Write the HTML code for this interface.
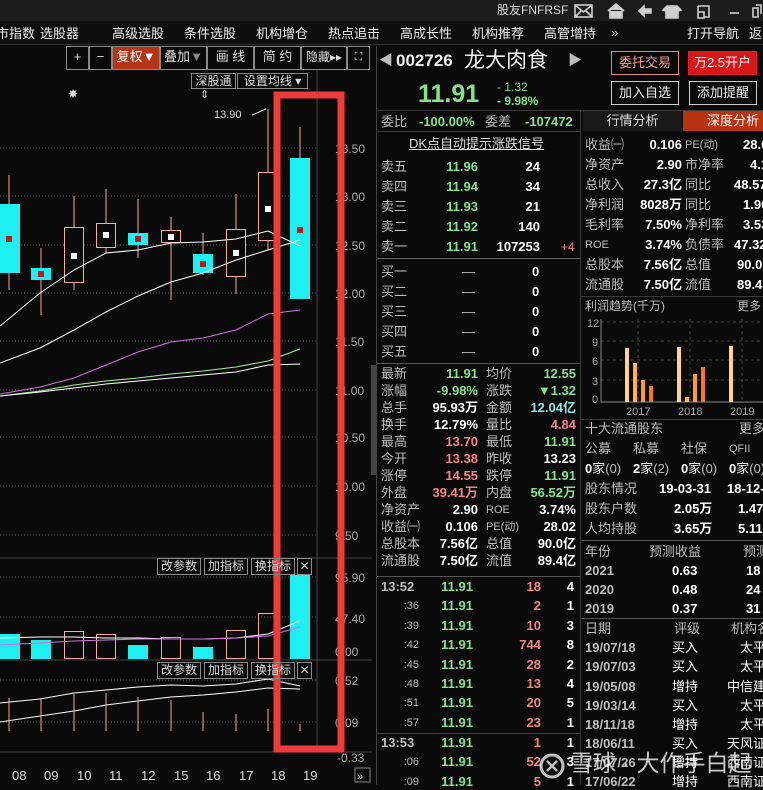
<!DOCTYPE html>
<html><head><meta charset="utf-8"><style>
*{margin:0;padding:0;box-sizing:border-box}
body{width:763px;height:785px;overflow:hidden;background:#0a0a0a;position:relative;font-family:"Liberation Sans","Noto Sans CJK SC",sans-serif;font-size:13px;color:#fff}
.a{position:absolute;white-space:nowrap;line-height:16px}
.g{color:#86e28e}.r{color:#f38585}.w{color:#fff}.l{color:#bdbdbd}.c{color:#8fe8ea}
.b{font-weight:bold}
.rt{text-align:right}
.btn{position:absolute;border:1px solid #8a8a8a;color:#ddd;text-align:center;line-height:20px;font-size:13px}
.hl{position:absolute;height:1px;background:#3a3a3a}
.vl{position:absolute;width:1px;background:#3a3a3a}
</style></head><body>
<!-- title bar -->
<div style="position:absolute;left:0;top:0;width:763px;height:21px;background:#1c1c1c"></div>
<div class="a" style="left:497px;top:2px;font-size:12px;color:#ddd">股友FNFRSF</div>
<svg style="position:absolute;left:570px;top:2px" width="193" height="18" viewBox="0 0 193 18" fill="none" stroke="#cfcfcf" stroke-width="1.6">
<rect x="5" y="3" width="17" height="12"/><path d="M5 3l8.5 7 8.5-7M5 15l6-6M22 15l-6-6"/>
<path d="M38 9l8-7 8 7M40 8v8h12V8" fill="#cfcfcf"/>
<path d="M69 9l5-5v3h7v4h-7v3z" fill="#cfcfcf"/>
<path d="M97 4h10l4 4-3 1v7h-12v-7l-3-1z" fill="#cfcfcf"/>
<path d="M128 4h11v11h-5M128 4v6h6v6h-6z"/>
<path d="M160 11h9"/><path d="M186 3h5v9M183 6h5v9h-5z"/>
</svg>
<!-- menu -->
<div style="position:absolute;left:0;top:21px;width:763px;height:24px;background:#0e0e0e;border-bottom:1px solid #333"></div>
<div class="a" style="top:26px;left:-4px;color:#eee">市指数</div>
<div class="a" style="top:26px;left:40px;color:#eee">选股器</div>
<div class="a" style="top:26px;left:112px;color:#eee">高级选股</div>
<div class="a" style="top:26px;left:184px;color:#eee">条件选股</div>
<div class="a" style="top:26px;left:256px;color:#eee">机构增仓</div>
<div class="a" style="top:26px;left:328px;color:#eee">热点追击</div>
<div class="a" style="top:26px;left:400px;color:#eee">高成长性</div>
<div class="a" style="top:26px;left:472px;color:#eee">机构推荐</div>
<div class="a" style="top:26px;left:544px;color:#eee">高管增持</div>
<div class="a" style="top:25px;left:611px;color:#ccc">»</div>
<div class="a" style="top:26px;left:687px;color:#eee">打开导航</div>
<div class="a" style="top:26px;left:749px;color:#eee">返回</div>

<!-- chart toolbar -->
<div style="position:absolute;left:66px;top:46px;width:304px;height:24px;border:1px solid #888;background:#0a0a0a"></div>
<div class="btn" style="left:66px;top:46px;width:23px;height:24px;border-width:1px">+</div>
<div class="btn" style="left:89px;top:46px;width:23px;height:24px">−</div>
<div class="btn" style="left:112px;top:46px;width:48px;height:24px;background:#b43414;color:#fff">复权▼</div>
<div class="btn" style="left:160px;top:46px;width:47px;height:24px">叠加<span style="color:#888">▼</span></div>
<div class="btn" style="left:207px;top:46px;width:47px;height:24px">画 线</div>
<div class="btn" style="left:254px;top:46px;width:47px;height:24px">简 约</div>
<div class="btn" style="left:301px;top:46px;width:46px;height:24px;font-size:12px">隐藏▸▸</div>
<div class="btn" style="left:347px;top:46px;width:23px;height:24px;font-size:11px">⛶</div>
<div class="btn" style="left:191px;top:73px;width:45px;height:16px;line-height:14px;font-size:12px">深股通</div>
<div class="btn" style="left:237px;top:73px;width:71px;height:16px;line-height:14px;font-size:12px">设置均线 ▾</div>

<!-- chart svg -->
<svg style="position:absolute;left:0;top:70px" width="372" height="715" viewBox="0 70 372 715">
<g stroke="#555" stroke-dasharray="1 2" stroke-width="1">
<line x1="0" y1="148" x2="317" y2="148"/><line x1="0" y1="196" x2="317" y2="196"/><line x1="0" y1="245" x2="317" y2="245"/>
<line x1="0" y1="293" x2="317" y2="293"/><line x1="0" y1="341" x2="317" y2="341"/><line x1="0" y1="390" x2="317" y2="390"/>
<line x1="0" y1="437" x2="317" y2="437"/><line x1="0" y1="486" x2="317" y2="486"/><line x1="0" y1="535" x2="317" y2="535"/>
<line x1="0" y1="577" x2="317" y2="577"/><line x1="0" y1="617" x2="317" y2="617"/><line x1="0" y1="680" x2="317" y2="680"/><line x1="0" y1="722" x2="317" y2="722"/>
</g>
<line x1="317" y1="70" x2="317" y2="752" stroke="#444"/>
<line x1="0" y1="558" x2="372" y2="558" stroke="#444"/>
<line x1="0" y1="660" x2="372" y2="660" stroke="#444"/>
<line x1="0" y1="752" x2="372" y2="752" stroke="#444"/>
<!-- candles -->
<g stroke="#f4a8a8" fill="none" stroke-width="1">
<line x1="9" y1="175" x2="9" y2="290"/><line x1="41" y1="248" x2="41" y2="315"/>
<line x1="74" y1="196" x2="74" y2="290"/><rect x="64.5" y="227.5" width="19" height="55" fill="#0a0a0a"/>
<line x1="106" y1="189" x2="106" y2="253"/><rect x="96.5" y="223.5" width="19" height="24" fill="#0a0a0a"/>
<line x1="138" y1="199" x2="138" y2="258"/>
<line x1="171" y1="217" x2="171" y2="300"/><rect x="161.5" y="230.5" width="19" height="12" fill="#0a0a0a"/>
<line x1="203" y1="233" x2="203" y2="275"/>
<line x1="236" y1="194" x2="236" y2="294"/><rect x="226.5" y="229.5" width="19" height="47" fill="#0a0a0a"/>
<line x1="268" y1="109" x2="268" y2="250"/><rect x="258.5" y="172.5" width="19" height="68" fill="#0a0a0a"/>
<line x1="300" y1="127" x2="300" y2="160"/>
</g>
<g fill="#1ef0f2">
<rect x="0" y="204" width="20" height="69"/><rect x="31" y="268" width="20" height="12"/>
<rect x="128" y="233" width="20" height="12"/><rect x="193" y="254" width="20" height="19"/>
<rect x="290" y="158" width="20" height="141"/>
</g>
<g fill="#c01818"><rect x="6" y="236" width="6" height="6"/><rect x="38" y="271" width="6" height="6"/><rect x="135" y="236" width="6" height="6"/><rect x="200" y="261" width="6" height="6"/><rect x="297" y="227" width="6" height="6"/></g>
<g fill="#fff"><rect x="71" y="253" width="6" height="6"/><rect x="103" y="232" width="6" height="6"/><rect x="168" y="234" width="6" height="6"/><rect x="233" y="250" width="6" height="6"/><rect x="265" y="206" width="6" height="6"/></g>
<!-- MAs -->
<g fill="none" stroke-width="1">
<polyline stroke="#fff" points="0,326 40,293 74,270 106,253 138,250 171,243 203,242 236,239 268,231 300,246"/>
<polyline stroke="#fff" points="0,363 40,348 74,330 106,312 138,296 171,282 203,273 236,260 268,250 300,240"/>
<polyline stroke="#d070e0" points="0,394 40,387 74,378 106,365 138,352 171,342 203,338 236,330 268,314 300,310"/>
<polyline stroke="#a8f0a0" points="0,396 40,391 74,385 106,381 138,378 171,374 203,371 236,367 268,361 300,349"/>
<polyline stroke="#fff" points="0,396 40,392 74,388 106,384 138,381 171,378 203,375 236,372 268,365 300,364"/>
</g>
<text x="214" y="118" fill="#ddd" font-size="11" font-family="Liberation Sans">13.90</text>
<path d="M252 115l14-6" stroke="#ddd" fill="none"/>
<text x="68" y="98" fill="#ddd" font-size="12">✸</text>
<text x="200" y="98" fill="#ddd" font-size="11">⇕</text>
<!-- price labels -->
<g fill="#aaa" font-size="12" font-family="Liberation Sans">
<text x="335" y="153">13.50</text><text x="335" y="201">13.00</text><text x="335" y="250">12.50</text><text x="335" y="298">12.00</text>
<text x="335" y="346">11.50</text><text x="335" y="395">11.00</text><text x="335" y="442">10.50</text><text x="335" y="491">10.00</text><text x="335" y="540">9.50</text>
<text x="335" y="582">95.90</text><text x="335" y="623">47.40</text><text x="335" y="656">0.00</text>
<text x="335" y="685">0.52</text><text x="335" y="727">0.09</text><text x="337" y="762">-0.33</text>
</g>
<!-- volume -->
<g fill="#1ef0f2"><rect x="0" y="634" width="20" height="25"/><rect x="31" y="640" width="20" height="19"/><rect x="128" y="645" width="20" height="14"/><rect x="193" y="647" width="20" height="12"/><rect x="290" y="575" width="20" height="84"/></g>
<g fill="none" stroke="#f4a8a8"><rect x="64.5" y="631.5" width="19" height="27"/><rect x="96.5" y="634.5" width="19" height="24"/><rect x="161.5" y="637.5" width="19" height="21"/><rect x="226.5" y="630.5" width="19" height="28"/><rect x="258.5" y="613.5" width="19" height="45"/></g>
<polyline fill="none" stroke="#fff" points="0,638 40,637 74,637 106,638 138,638 171,639 203,639 236,638 268,634 300,621"/>
<polyline fill="none" stroke="#d070e0" points="0,645 40,643 74,641 106,640 138,639 171,639 203,639 236,638 268,636 300,627"/>
<!-- MACD -->
<polyline fill="none" stroke="#fff" points="0,703 40,699 74,693 106,690 138,687 171,685 203,686 236,684 268,679 300,686"/>
<polyline fill="none" stroke="#fff" points="0,722 40,716 74,711 106,705 138,701 171,697 203,695 236,692 268,688 300,689"/>
<g stroke="#f4a8a8"><line x1="9" y1="698" x2="9" y2="731"/><line x1="41" y1="698" x2="41" y2="731"/><line x1="74" y1="693" x2="74" y2="731"/><line x1="106" y1="693" x2="106" y2="731"/><line x1="138" y1="697" x2="138" y2="731"/><line x1="171" y1="700" x2="171" y2="731"/><line x1="203" y1="712" x2="203" y2="731"/><line x1="236" y1="714" x2="236" y2="731"/><line x1="268" y1="709" x2="268" y2="731"/><line x1="300" y1="724" x2="300" y2="731"/></g>
<!-- dates -->
<g fill="#ddd" font-size="13" font-family="Liberation Sans">
<text x="12" y="780">08</text><text x="44" y="780">09</text><text x="77" y="780">10</text><text x="109" y="780">11</text><text x="141" y="780">12</text><text x="174" y="780">15</text><text x="206" y="780">16</text><text x="239" y="780">17</text><text x="271" y="780">18</text><text x="303" y="780">19</text>
</g>
<rect x="355" y="768" width="15" height="14" fill="none" stroke="#888"/><text x="357" y="780" fill="#ddd" font-size="11">»</text>
<!-- red highlight box -->
<rect x="277" y="95" width="64" height="654" fill="none" stroke="#ee3a3a" stroke-width="7"/>
</svg>
<div class="btn" style="left:157px;top:558px;width:44px;height:17px;line-height:15px;font-size:12px">改参数</div>
<div class="btn" style="left:204px;top:558px;width:44px;height:17px;line-height:15px;font-size:12px">加指标</div>
<div class="btn" style="left:251px;top:558px;width:44px;height:17px;line-height:15px;font-size:12px">换指标</div>
<div class="btn" style="left:297px;top:558px;width:15px;height:17px;line-height:15px;font-size:12px">✕</div>
<div class="btn" style="left:157px;top:662px;width:44px;height:17px;line-height:15px;font-size:12px">改参数</div>
<div class="btn" style="left:204px;top:662px;width:44px;height:17px;line-height:15px;font-size:12px">加指标</div>
<div class="btn" style="left:251px;top:662px;width:44px;height:17px;line-height:15px;font-size:12px">换指标</div>
<div class="btn" style="left:297px;top:662px;width:15px;height:17px;line-height:15px;font-size:12px">✕</div>
<div style="position:absolute;left:371px;top:365px;width:5px;height:110px;background:#444"></div>

<!-- right panel -->
<div class="vl" style="left:376px;top:46px;height:739px;background:#444"></div>
<div class="a l" style="left:379px;top:52px;font-size:14px">◀</div>
<div class="a b" style="left:396px;top:51px;font-size:17px;line-height:20px;color:#eee">002726</div>
<div class="a" style="left:464px;top:48px;font-size:21px;line-height:26px;color:#eee">龙大肉食</div>
<div class="a l" style="left:568px;top:52px;font-size:14px">▶</div>
<div class="a b g" style="left:418px;top:80px;font-size:25px;line-height:28px">11.91</div>
<div class="a g" style="left:497px;top:80px;font-size:12px;line-height:14px">- 1.32</div>
<div class="a g b" style="left:497px;top:94px;font-size:12px;line-height:14px">- 9.98%</div>
<div class="btn" style="left:611px;top:51px;width:68px;height:24px;border-color:#e08a8a;color:#f49a9a;line-height:22px">委托交易</div>
<div class="btn" style="left:688px;top:51px;width:69px;height:24px;border-color:#e02020;background:#d81818;color:#fff;line-height:22px">万2.5开户</div>
<div class="btn" style="left:611px;top:81px;width:68px;height:24px;border-color:#ccc;color:#eee;line-height:22px">加入自选</div>
<div class="btn" style="left:689px;top:81px;width:68px;height:24px;border-color:#ccc;color:#eee;line-height:22px">添加提醒</div>
<div class="hl" style="left:377px;top:110px;width:386px"></div>
<div class="a l" style="left:381px;top:114px">委比</div>
<div class="a b g" style="left:419px;top:114px">-100.00%</div>
<div class="a l" style="left:485px;top:114px">委差</div>
<div class="a b g" style="left:525px;top:114px">-107472</div>
<div style="position:absolute;left:583px;top:111px;width:99px;height:20px;background:#1a1a1a;color:#ddd;text-align:center;line-height:20px">行情分析</div>
<div style="position:absolute;left:683px;top:111px;width:80px;height:20px;background:#b83212;color:#fff;text-align:right;padding-right:4px;line-height:20px">深度分析</div>
<div class="vl" style="left:580px;top:110px;height:675px"></div>
<div class="hl" style="left:377px;top:131px;width:203px"></div>
<div class="a" style="left:409px;top:136px;color:#ddd;text-decoration:underline">DK点自动提示涨跌信号</div>

<!-- order book -->
<div class="a l" style="left:381px;top:159px">卖五</div><div class="a b g rt" style="left:430px;top:159px;width:48px">11.96</div><div class="a b rt" style="left:490px;top:159px;width:50px">24</div>
<div class="a l" style="left:381px;top:179px">卖四</div><div class="a b g rt" style="left:430px;top:179px;width:48px">11.94</div><div class="a b rt" style="left:490px;top:179px;width:50px">34</div>
<div class="a l" style="left:381px;top:199px">卖三</div><div class="a b g rt" style="left:430px;top:199px;width:48px">11.93</div><div class="a b rt" style="left:490px;top:199px;width:50px">21</div>
<div class="a l" style="left:381px;top:219px">卖二</div><div class="a b g rt" style="left:430px;top:219px;width:48px">11.92</div><div class="a b rt" style="left:490px;top:219px;width:50px">140</div>
<div class="a l" style="left:381px;top:239px">卖一</div><div class="a b g rt" style="left:430px;top:239px;width:48px">11.91</div><div class="a b rt" style="left:480px;top:239px;width:60px">107253</div><div class="a r" style="left:561px;top:239px;font-size:12px">+4</div>
<div class="hl" style="left:377px;top:258px;width:203px;background:#666"></div>
<div class="a l" style="left:381px;top:264px">买一</div><div class="a l" style="left:462px;top:264px">—</div><div class="a b" style="left:532px;top:264px">0</div>
<div class="a l" style="left:381px;top:284px">买二</div><div class="a l" style="left:462px;top:284px">—</div><div class="a b" style="left:532px;top:284px">0</div>
<div class="a l" style="left:381px;top:304px">买三</div><div class="a l" style="left:462px;top:304px">—</div><div class="a b" style="left:532px;top:304px">0</div>
<div class="a l" style="left:381px;top:324px">买四</div><div class="a l" style="left:462px;top:324px">—</div><div class="a b" style="left:532px;top:324px">0</div>
<div class="a l" style="left:381px;top:344px">买五</div><div class="a l" style="left:462px;top:344px">—</div><div class="a b" style="left:532px;top:344px">0</div>
<div class="hl" style="left:377px;top:363px;width:203px;background:#555"></div>

<!-- stats -->
<div style="position:absolute;left:381px;top:366px;width:197px;font-size:13px">
<div class="a l" style="left:0;top:0">最新</div><div class="a b g rt" style="left:40px;top:0;width:57px">11.91</div><div class="a l" style="left:105px;top:0">均价</div><div class="a b g rt" style="left:140px;top:0;width:55px">12.55</div>
<div class="a l" style="left:0;top:17px">涨幅</div><div class="a b g rt" style="left:30px;top:17px;width:67px">-9.98%</div><div class="a l" style="left:105px;top:17px">涨跌</div><div class="a b g rt" style="left:140px;top:17px;width:55px">▼1.32</div>
<div class="a l" style="left:0;top:34px">总手</div><div class="a b rt" style="left:30px;top:34px;width:67px">95.93万</div><div class="a l" style="left:105px;top:34px">金额</div><div class="a b c rt" style="left:130px;top:34px;width:65px">12.04亿</div>
<div class="a l" style="left:0;top:51px">换手</div><div class="a b rt" style="left:30px;top:51px;width:67px">12.79%</div><div class="a l" style="left:105px;top:51px">量比</div><div class="a b r rt" style="left:140px;top:51px;width:55px">4.84</div>
<div class="a l" style="left:0;top:68px">最高</div><div class="a b r rt" style="left:30px;top:68px;width:67px">13.70</div><div class="a l" style="left:105px;top:68px">最低</div><div class="a b g rt" style="left:140px;top:68px;width:55px">11.91</div>
<div class="a l" style="left:0;top:85px">今开</div><div class="a b r rt" style="left:30px;top:85px;width:67px">13.38</div><div class="a l" style="left:105px;top:85px">昨收</div><div class="a b rt" style="left:140px;top:85px;width:55px">13.23</div>
<div class="a l" style="left:0;top:102px">涨停</div><div class="a b r rt" style="left:30px;top:102px;width:67px">14.55</div><div class="a l" style="left:105px;top:102px">跌停</div><div class="a b g rt" style="left:140px;top:102px;width:55px">11.91</div>
<div class="a l" style="left:0;top:119px">外盘</div><div class="a b r rt" style="left:30px;top:119px;width:67px">39.41万</div><div class="a l" style="left:105px;top:119px">内盘</div><div class="a b g rt" style="left:130px;top:119px;width:65px">56.52万</div>
<div class="a l" style="left:0;top:136px">净资产</div><div class="a b rt" style="left:30px;top:136px;width:67px">2.90</div><div class="a l" style="left:105px;top:136px;font-size:11px">ROE</div><div class="a b rt" style="left:140px;top:136px;width:55px">3.74%</div>
<div class="a l" style="left:0;top:153px">收益㈠</div><div class="a b rt" style="left:30px;top:153px;width:67px">0.106</div><div class="a l" style="left:105px;top:153px;font-size:11px">PE(动)</div><div class="a b rt" style="left:140px;top:153px;width:55px">28.02</div>
<div class="a l" style="left:0;top:170px">总股本</div><div class="a b rt" style="left:30px;top:170px;width:67px">7.56亿</div><div class="a l" style="left:105px;top:170px">总值</div><div class="a b rt" style="left:130px;top:170px;width:65px">90.0亿</div>
<div class="a l" style="left:0;top:187px">流通股</div><div class="a b rt" style="left:30px;top:187px;width:67px">7.50亿</div><div class="a l" style="left:105px;top:187px">流值</div><div class="a b rt" style="left:130px;top:187px;width:65px">89.4亿</div>
</div>
<div class="hl" style="left:377px;top:576px;width:203px;background:#555"></div>

<!-- ticks -->
<div style="position:absolute;left:381px;top:579px;width:197px">
<div class="a b l" style="left:0;top:0">13:52</div><div class="a b g rt" style="left:40px;top:0;width:52px">11.91</div><div class="a b r rt" style="left:110px;top:0;width:50px">18</div><div class="a b rt" style="left:170px;top:0;width:23px">4</div>
<div class="a l rt" style="left:0;top:19px;width:38px;font-size:11px">:36</div><div class="a b g rt" style="left:40px;top:19px;width:52px">11.91</div><div class="a b r rt" style="left:110px;top:19px;width:50px">2</div><div class="a b rt" style="left:170px;top:19px;width:23px">1</div>
<div class="a l rt" style="left:0;top:39px;width:38px;font-size:11px">:39</div><div class="a b g rt" style="left:40px;top:39px;width:52px">11.91</div><div class="a b r rt" style="left:110px;top:39px;width:50px">10</div><div class="a b rt" style="left:170px;top:39px;width:23px">3</div>
<div class="a l rt" style="left:0;top:58px;width:38px;font-size:11px">:42</div><div class="a b g rt" style="left:40px;top:58px;width:52px">11.91</div><div class="a b r rt" style="left:110px;top:58px;width:50px">744</div><div class="a b rt" style="left:170px;top:58px;width:23px">8</div>
<div class="a l rt" style="left:0;top:78px;width:38px;font-size:11px">:45</div><div class="a b g rt" style="left:40px;top:78px;width:52px">11.91</div><div class="a b r rt" style="left:110px;top:78px;width:50px">28</div><div class="a b rt" style="left:170px;top:78px;width:23px">2</div>
<div class="a l rt" style="left:0;top:97px;width:38px;font-size:11px">:48</div><div class="a b g rt" style="left:40px;top:97px;width:52px">11.91</div><div class="a b r rt" style="left:110px;top:97px;width:50px">13</div><div class="a b rt" style="left:170px;top:97px;width:23px">4</div>
<div class="a l rt" style="left:0;top:116px;width:38px;font-size:11px">:51</div><div class="a b g rt" style="left:40px;top:116px;width:52px">11.91</div><div class="a b r rt" style="left:110px;top:116px;width:50px">20</div><div class="a b rt" style="left:170px;top:116px;width:23px">5</div>
<div class="a l rt" style="left:0;top:136px;width:38px;font-size:11px">:57</div><div class="a b g rt" style="left:40px;top:136px;width:52px">11.91</div><div class="a b r rt" style="left:110px;top:136px;width:50px">23</div><div class="a b rt" style="left:170px;top:136px;width:23px">1</div>
<div class="a b l" style="left:0;top:156px">13:53</div><div class="a b g rt" style="left:40px;top:156px;width:52px">11.91</div><div class="a b r rt" style="left:110px;top:156px;width:50px">1</div><div class="a b rt" style="left:170px;top:156px;width:23px">1</div>
<div class="a l rt" style="left:0;top:175px;width:38px;font-size:11px">:06</div><div class="a b g rt" style="left:40px;top:175px;width:52px">11.91</div><div class="a b r rt" style="left:110px;top:175px;width:50px">52</div><div class="a b rt" style="left:170px;top:175px;width:23px">3</div>
<div class="a l rt" style="left:0;top:195px;width:38px;font-size:11px">:09</div><div class="a b g rt" style="left:40px;top:195px;width:52px">11.91</div><div class="a b r rt" style="left:110px;top:195px;width:50px">5</div><div class="a b rt" style="left:170px;top:195px;width:23px">1</div>
</div>
<div class="hl" style="left:377px;top:733px;width:203px;background:#444"></div>

<!-- right column -->
<div style="position:absolute;left:585px;top:137px;width:180px">
<div class="a l" style="left:0;top:0">收益㈠</div><div class="a b rt" style="left:40px;top:0;width:57px">0.106</div><div class="a l" style="left:100px;top:0;font-size:11px">PE(动)</div><div class="a b" style="left:158px;top:0">28.02</div>
<div class="a l" style="left:0;top:20px">净资产</div><div class="a b rt" style="left:40px;top:20px;width:57px">2.90</div><div class="a l" style="left:100px;top:20px">市净率</div><div class="a b" style="left:165px;top:20px">4.11</div>
<div class="a l" style="left:0;top:40px">总收入</div><div class="a b rt" style="left:40px;top:40px;width:57px">27.3亿</div><div class="a l" style="left:100px;top:40px">同比</div><div class="a b" style="left:149px;top:40px">48.57</div>
<div class="a l" style="left:0;top:60px">净利润</div><div class="a b rt" style="left:30px;top:60px;width:67px">8028万</div><div class="a l" style="left:100px;top:60px">同比</div><div class="a b" style="left:158px;top:60px">1.90</div>
<div class="a l" style="left:0;top:80px">毛利率</div><div class="a b rt" style="left:30px;top:80px;width:67px">7.50%</div><div class="a l" style="left:100px;top:80px">净利率</div><div class="a b" style="left:158px;top:80px">3.53</div>
<div class="a l" style="left:0;top:100px;font-size:11px">ROE</div><div class="a b rt" style="left:30px;top:100px;width:67px">3.74%</div><div class="a l" style="left:100px;top:100px">负债率</div><div class="a b" style="left:149px;top:100px">47.32</div>
<div class="a l" style="left:0;top:120px">总股本</div><div class="a b rt" style="left:30px;top:120px;width:67px">7.56亿</div><div class="a l" style="left:100px;top:120px">总值</div><div class="a b" style="left:152px;top:120px">90.0</div>
<div class="a l" style="left:0;top:140px">流通股</div><div class="a b rt" style="left:30px;top:140px;width:67px">7.50亿</div><div class="a l" style="left:100px;top:140px">流值</div><div class="a b" style="left:152px;top:140px">89.4</div>
</div>
<div class="hl" style="left:581px;top:296px;width:182px"></div>
<div class="a l" style="left:585px;top:298px;font-size:12px">利润趋势(千万)</div>
<div class="a l" style="left:737px;top:298px;font-size:12px">更多</div>
<svg style="position:absolute;left:581px;top:314px" width="182" height="106">
<g stroke="#444" stroke-dasharray="3 3"><line x1="20" y1="8" x2="182" y2="8"/><line x1="20" y1="27" x2="182" y2="27"/><line x1="20" y1="46" x2="182" y2="46"/><line x1="20" y1="66" x2="182" y2="66"/><line x1="57" y1="5" x2="57" y2="88"/><line x1="109" y1="5" x2="109" y2="88"/><line x1="161" y1="5" x2="161" y2="88"/></g>
<path d="M20 5V88H182" stroke="#888" fill="none"/>
<g fill="#aaa" font-size="11" font-family="Liberation Sans"><text x="6" y="13">12</text><text x="11" y="32">9</text><text x="11" y="51">6</text><text x="11" y="71">3</text><text x="11" y="89">0</text>
<text x="45" y="101">2017</text><text x="97" y="101">2018</text><text x="149" y="101">2019</text></g>
<rect x="44" y="34" width="4" height="54" fill="#ffd488"/><rect x="52" y="49" width="4" height="39" fill="#ffb444"/><rect x="60" y="66" width="4" height="22" fill="#ff9c22"/><rect x="68" y="72" width="4" height="16" fill="#f07e14"/>
<rect x="96" y="33" width="4" height="55" fill="#ffd488"/><rect x="104" y="83" width="4" height="5" fill="#ffb444"/><rect x="112" y="60" width="4" height="28" fill="#ff9c22"/><rect x="120" y="53" width="4" height="35" fill="#f07e14"/>
<rect x="148" y="32" width="4" height="56" fill="#ffd488"/>
</svg>
<div class="hl" style="left:581px;top:419px;width:182px"></div>
<div class="a l" style="left:585px;top:421px">十大流通股东</div><div class="a l" style="left:739px;top:421px">更多</div>
<div class="a l" style="left:585px;top:441px">公募</div><div class="a l" style="left:633px;top:441px">私募</div><div class="a l" style="left:681px;top:441px">社保</div><div class="a l" style="left:729px;top:441px;font-size:11px">QFII</div>
<div class="a" style="left:585px;top:461px"><b>0</b>家<span class="l">(0)</span></div><div class="a" style="left:633px;top:461px"><b>2</b>家<span class="l">(2)</span></div><div class="a" style="left:681px;top:461px"><b>0</b>家<span class="l">(0)</span></div><div class="a" style="left:729px;top:461px"><b>0</b>家<span class="l">(0)</span></div>
<div class="a l" style="left:585px;top:481px">股东情况</div><div class="a b" style="left:659px;top:481px">19-03-31</div><div class="a b" style="left:727px;top:481px">18-12-31</div>
<div class="a l" style="left:585px;top:501px">股东户数</div><div class="a b" style="left:674px;top:501px">2.05万</div><div class="a b" style="left:738px;top:501px">1.47</div>
<div class="a l" style="left:585px;top:521px">人均持股</div><div class="a b" style="left:674px;top:521px">3.65万</div><div class="a b" style="left:738px;top:521px">5.11</div>
<div class="hl" style="left:581px;top:540px;width:182px;background:#555"></div>
<div class="a l" style="left:585px;top:544px">年份</div><div class="a l" style="left:649px;top:544px">预测收益</div><div class="a l" style="left:743px;top:544px">预测</div>
<div class="a b l" style="left:585px;top:563px">2021</div><div class="a b" style="left:672px;top:563px">0.63</div><div class="a b" style="left:746px;top:563px">18</div>
<div class="a b l" style="left:585px;top:582px">2020</div><div class="a b" style="left:672px;top:582px">0.48</div><div class="a b" style="left:746px;top:582px">24</div>
<div class="a b l" style="left:585px;top:601px">2019</div><div class="a b" style="left:672px;top:601px">0.37</div><div class="a b" style="left:746px;top:601px">31</div>
<div class="hl" style="left:581px;top:618px;width:182px;background:#555"></div>
<div class="a l" style="left:585px;top:621px">日期</div><div class="a l" style="left:674px;top:621px">评级</div><div class="a l" style="left:731px;top:621px">机构名</div>
<div class="a b l" style="left:585px;top:640px">19/07/18</div><div class="a" style="left:672px;top:640px">买入</div><div class="a" style="left:740px;top:640px">太平洋</div>
<div class="a b l" style="left:585px;top:659px">19/07/03</div><div class="a" style="left:672px;top:659px">买入</div><div class="a" style="left:740px;top:659px">太平洋</div>
<div class="a b l" style="left:585px;top:679px">19/05/08</div><div class="a" style="left:672px;top:679px">增持</div><div class="a" style="left:727px;top:679px">中信建投</div>
<div class="a b l" style="left:585px;top:698px">19/03/14</div><div class="a" style="left:672px;top:698px">买入</div><div class="a" style="left:740px;top:698px">太平洋</div>
<div class="a b l" style="left:585px;top:717px">18/11/18</div><div class="a" style="left:672px;top:717px">增持</div><div class="a" style="left:740px;top:717px">太平洋</div>
<div class="a b l" style="left:585px;top:736px">18/06/11</div><div class="a" style="left:672px;top:736px">买入</div><div class="a" style="left:727px;top:736px">天风证券</div>
<div class="a b l" style="left:585px;top:755px">17/07/26</div><div class="a" style="left:672px;top:755px">增持</div><div class="a" style="left:727px;top:755px">西南证券</div>
<div class="a b l" style="left:585px;top:774px">17/06/22</div><div class="a" style="left:672px;top:774px">增持</div><div class="a" style="left:727px;top:774px">西南证券</div>
<!-- watermark -->
<svg style="position:absolute;left:538px;top:752px" width="28" height="28"><circle cx="14" cy="14" r="11" fill="none" stroke="rgba(255,255,255,0.75)" stroke-width="3"/><path d="M9 9l10 10M19 9l-10 10" stroke="rgba(255,255,255,0.75)" stroke-width="2.5"/></svg>
<div class="a" style="left:570px;top:749px;font-size:23px;line-height:28px;color:rgba(255,255,255,0.78)">雪球 · 大作手白起</div>
</body></html>
